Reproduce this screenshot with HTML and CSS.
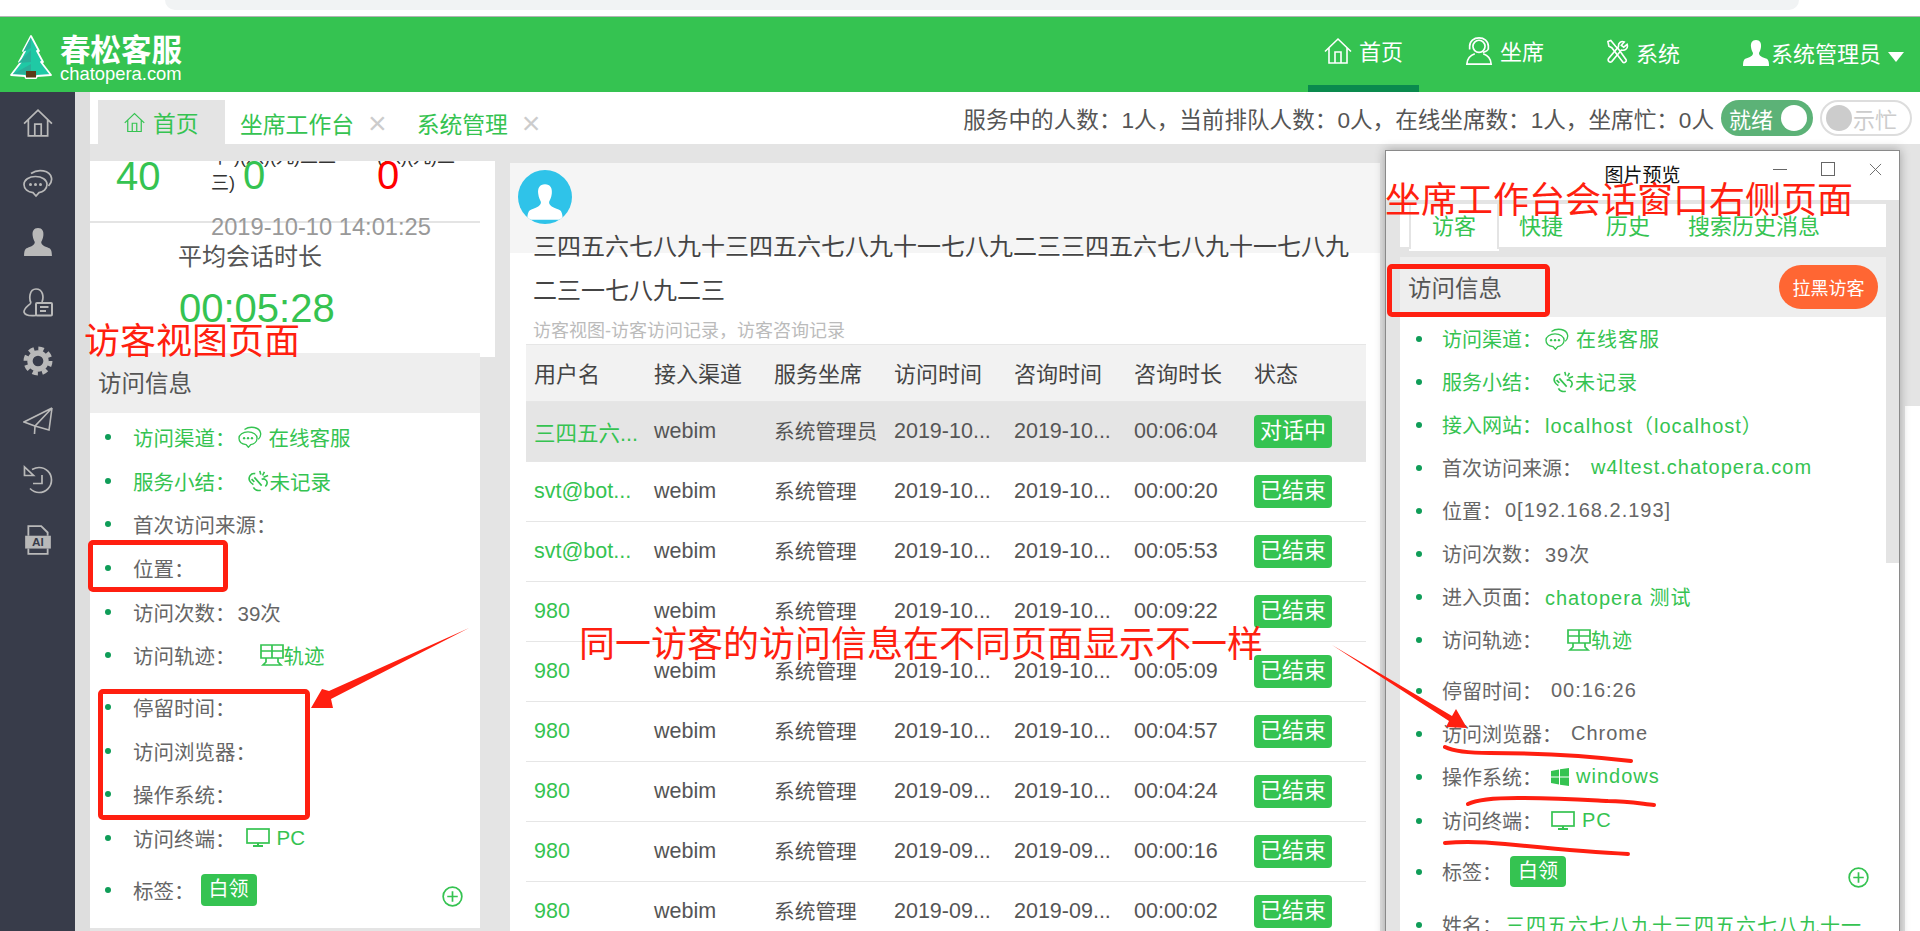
FILE: index.html
```html
<!DOCTYPE html>
<html lang="zh-CN">
<head>
<meta charset="UTF-8">
<title>春松客服</title>
<link rel="stylesheet" href="styles.css">
</head>
<body>

<svg class="icon-defs" xmlns="http://www.w3.org/2000/svg">
  <symbol id="i-home" viewBox="0 0 28 26"><path d="M1 13.500 14 1l13 12.500M5 10v15h18V10M11 25V14h6v11" fill="none" stroke="currentColor" stroke-width="1.600"/></symbol>
  <symbol id="i-chat" viewBox="0 0 30 28"><path d="M13 27l-3-3.400C5 23 1 20 1 15.500 1 11 6 7.500 12.500 7.500S24 11 24 15.500c0 4.500-4 7.500-8 8.100z" fill="none" stroke="currentColor" stroke-width="1.700"/><path d="M8 4.500C15-.5 27 1 28.500 9c.5 3-1 6-3 8" fill="none" stroke="currentColor" stroke-width="1.700"/><circle cx="7.500" cy="15.500" r="1.500" fill="currentColor"/><circle cx="12.500" cy="15.500" r="1.500" fill="currentColor"/><circle cx="17.500" cy="15.500" r="1.500" fill="currentColor"/></symbol>
  <symbol id="i-person" viewBox="0 0 28 28"><path d="M14 1c-4 0-5.500 3-5 7 .3 3 1.500 5 2 6 0 3-3 4-7 5.500C2 20.200 1 22 1 27h26c0-5-1-6.800-3-7.500-4-1.500-7-2.500-7-5.500.5-1 1.700-3 2-6 .5-4-1-7-5-7z" fill="currentColor"/></symbol>
  <symbol id="i-card" viewBox="0 0 30 30"><path d="M8 16C6 12 6 2 13 2c7 0 8 8 6 13M8 16c-3 3-7 5-7 9 1 4 7 4 12 3.500" fill="none" stroke="currentColor" stroke-width="1.700"/><rect x="13" y="16" width="16" height="12.500" rx="1" fill="none" stroke="currentColor" stroke-width="2"/><path d="M17 20h8.500M17 24h6" stroke="currentColor" stroke-width="2"/></symbol>
  <symbol id="i-gear" viewBox="0 0 28 28"><circle cx="14" cy="14" r="7.500" fill="none" stroke="currentColor" stroke-width="5"/><circle cx="14" cy="14" r="11.500" fill="none" stroke="currentColor" stroke-width="4" stroke-dasharray="5 4.030"/></symbol>
  <symbol id="i-plane" viewBox="0 0 30 28"><path d="M29 1 1 15l11 4zM29 1 12 19l-.5 8M29 1l-3 22-14-4" fill="none" stroke="currentColor" stroke-width="1.600"/></symbol>
  <symbol id="i-history" viewBox="0 0 30 30"><path d="M9 4.500C12 3 14 2.500 16 2.500c7 0 12.500 5.500 12.500 12.500S23 27.500 16 27.500c-3.500 0-6.500-1.500-9-4" fill="none" stroke="currentColor" stroke-width="1.700"/><path d="M1.500 2v8.500h9zM19 10v8.500h-9" fill="none" stroke="currentColor" stroke-width="1.700"/></symbol>
  <symbol id="i-ai" viewBox="0 0 24 28"><path d="M3 10V1h12l6 6v3M3 22v5h18v-5" fill="none" stroke="currentColor" stroke-width="1.700"/><rect y="10" width="24" height="12" fill="currentColor"/><text x="12" y="20" text-anchor="middle" font-family="Liberation Sans" font-size="11" font-weight="bold" fill="#383c4a">AI</text></symbol>
  <symbol id="i-agent" viewBox="0 0 28 30"><circle cx="14" cy="10" r="6.500" fill="none" stroke="currentColor" stroke-width="1.800"/><path d="M4 12V10C4 4.500 8.500 1 14 1s10 3.500 10 9v2M24 12c0 2-3 4-6 4.500M4 8.500v5M24 8.500v5" fill="none" stroke="currentColor" stroke-width="1.800"/><path d="M9.500 18C5 19.500 1.500 22 1 29h26c-.5-7-4-9.500-8.500-11" fill="none" stroke="currentColor" stroke-width="1.800"/></symbol>
  <symbol id="i-tools" viewBox="0 0 24 26"><path d="M2 2l3-1 5 6 3 3 8 11c1 2-2 4-3.500 2.500L9.500 13 6 8.500 3 7z" fill="none" stroke="currentColor" stroke-width="1.700"/><path d="M22 5l-3.500 3-2.500-2 3-3.500C16 1 12.500 3.500 13 7.500L2.500 20c-1 2.500 1.500 4.500 3.500 3l10-12c4 1 7.500-2 6-6z" fill="none" stroke="currentColor" stroke-width="1.700"/></symbol>
  <symbol id="i-unrec" viewBox="0 0 24 24"><path d="M9 4C4 3 1 8 3 12c1 2 2.500 3 4 4M7 19c1.500 3 5 4 8 3M14 1l1 4M19 2l-2 4M23 6l-5 2M16 10c3-1 6 1 6 4 0 2-1 3-2 4M8 8l8 9M5 10l3 3" fill="none" stroke="currentColor" stroke-width="1.800"/></symbol>
  <symbol id="i-track" viewBox="0 0 24 22"><path d="M1 1h22v13H1zM12 1v13M1 7h22M6 14v4l-3 3h18l-3-3v-4" fill="none" stroke="currentColor" stroke-width="1.700"/></symbol>
  <symbol id="i-pc" viewBox="0 0 24 20"><rect x="1" y="1" width="22" height="14" fill="none" stroke="currentColor" stroke-width="1.700"/><path d="M11 15h2v2h4v2H7v-2h4z" fill="currentColor"/></symbol>
  <symbol id="i-win" viewBox="0 0 18 18"><path d="M0 3l8-1.500V8.500H0zM9 1.300 18 0v8.500H9zM0 9.500h8v7L0 15zM9 9.500h9V18l-9-1.300z" fill="currentColor"/></symbol>
  <symbol id="i-plus" viewBox="0 0 22 22"><circle cx="11" cy="11" r="9.800" fill="none" stroke="currentColor" stroke-width="1.800"/><path d="M5.500 11h11M11 5.500v11" stroke="currentColor" stroke-width="1.800"/></symbol>
</svg>

<div class="browser-strip"><div class="address-bar"></div></div>

<header class="topbar">
  <div class="logo">
    <svg class="logo-tree" viewBox="0 0 44 44">
      <path d="M22 1 30 16l-2 0 6 11-2 0 10 13-14 1-1 2h-10l-1-2-14-1 10-13-2 0 6-11-2 0z" fill="#1fc9a5" stroke="#fff" stroke-width="1.800" stroke-linejoin="round"/>
      <path d="M22 2 22 13 14 17zM22 15 22 27 9 28zM22 29v10L4 39z" fill="#2ab09a"/>
      <rect x="17" y="36" width="10" height="6.500" fill="#5c3a16"/>
    </svg>
    <div class="logo-text">
      <div class="logo-cn">春松客服</div>
      <div class="logo-en">chatopera.com</div>
    </div>
  </div>
  <nav class="topnav">
    <a class="nav-item active"><svg class="nav-icon"><use href="#i-home"/></svg>首页</a>
    <a class="nav-item"><svg class="nav-icon"><use href="#i-agent"/></svg>坐席</a>
    <a class="nav-item low"><svg class="nav-icon small"><use href="#i-tools"/></svg>系统</a>
    <a class="nav-item low user"><svg class="nav-icon"><use href="#i-person"/></svg>系统管理员<span class="caret"></span></a>
  </nav>
</header>

<div class="layout">
  <aside class="sidebar">
    <svg class="side-icon"><use href="#i-home"/></svg>
    <svg class="side-icon"><use href="#i-chat"/></svg>
    <svg class="side-icon"><use href="#i-person"/></svg>
    <svg class="side-icon"><use href="#i-card"/></svg>
    <svg class="side-icon"><use href="#i-gear"/></svg>
    <svg class="side-icon"><use href="#i-plane"/></svg>
    <svg class="side-icon"><use href="#i-history"/></svg>
    <svg class="side-icon"><use href="#i-ai"/></svg>
  </aside>

  <main class="content">
    <div class="tabbar">
      <div class="tab active"><svg class="tab-icon"><use href="#i-home"/></svg>首页</div>
      <div class="tab">坐席工作台<span class="tab-close">×</span></div>
      <div class="tab">系统管理<span class="tab-close">×</span></div>
      <div class="status">
        <span>服务中的人数：1人，当前排队人数：0人，在线坐席数：1人，坐席忙：0人</span>
        <div class="toggle on">就绪<i></i></div>
        <div class="toggle off"><i></i>示忙</div>
      </div>
    </div>

    <div class="workspace">
      <section class="left-col">
        <div class="summary">
          <div class="stats">
            <div class="stat-num first">40</div>
            <div class="stat-label wide">十 )(八)(九)二二<br>三)<b class="stat-num">0</b></div>
            <div class="stat-label">(八)(九)二<br><b class="stat-num red">0</b></div>
          </div>
          <div class="stat-date">2019-10-10 14:01:25</div>
          <div class="avg-title">平均会话时长</div>
          <div class="avg-value">00:05:28</div>
        </div>
        <div class="info-panel">
          <div class="info-head">访问信息</div>
          <ul class="info-list">
            <li class="green">访问渠道：<span class="val"><svg class="ico"><use href="#i-chat"/></svg>在线客服</span></li>
            <li class="green">服务小结：<span class="val wide"><svg class="ico flush"><use href="#i-unrec"/></svg>未记录</span></li>
            <li>首次访问来源：</li>
            <li>位置：</li>
            <li>访问次数：<span class="val plain">39次</span></li>
            <li>访问轨迹：<span class="val far green"><svg class="ico flush"><use href="#i-track"/></svg>轨迹</span></li>
            <li class="gap">停留时间：</li>
            <li>访问浏览器：</li>
            <li>操作系统：</li>
            <li>访问终端：<span class="val wide green"><svg class="ico"><use href="#i-pc"/></svg>PC</span></li>
            <li class="gap">标签：<span class="tag">白领</span><svg class="plus"><use href="#i-plus"/></svg></li>
          </ul>
        </div>
      </section>

      <section class="visitor">
        <div class="visitor-head">
          <div class="avatar"><svg viewBox="0 0 28 28"><use href="#i-person"/></svg></div>
          <h1 class="visitor-name">三四五六七八九十三四五六七八九十一七八九二三三四五六七八九十一七八九二三一七八九二三</h1>
          <div class="visitor-sub">访客视图-访客访问记录，访客咨询记录</div>
        </div>
        <table class="record-table">
          <thead>
            <tr><th>用户名</th><th>接入渠道</th><th>服务坐席</th><th>访问时间</th><th>咨询时间</th><th>咨询时长</th><th>状态</th></tr>
          </thead>
          <tbody>
            <tr class="current"><td class="user">三四五六...</td><td>webim</td><td>系统管理员</td><td>2019-10...</td><td>2019-10...</td><td>00:06:04</td><td><span class="badge">对话中</span></td></tr>
            <tr><td class="user">svt@bot...</td><td>webim</td><td>系统管理</td><td>2019-10...</td><td>2019-10...</td><td>00:00:20</td><td><span class="badge">已结束</span></td></tr>
            <tr><td class="user">svt@bot...</td><td>webim</td><td>系统管理</td><td>2019-10...</td><td>2019-10...</td><td>00:05:53</td><td><span class="badge">已结束</span></td></tr>
            <tr><td class="user">980</td><td>webim</td><td>系统管理</td><td>2019-10...</td><td>2019-10...</td><td>00:09:22</td><td><span class="badge">已结束</span></td></tr>
            <tr><td class="user">980</td><td>webim</td><td>系统管理</td><td>2019-10...</td><td>2019-10...</td><td>00:05:09</td><td><span class="badge">已结束</span></td></tr>
            <tr><td class="user">980</td><td>webim</td><td>系统管理</td><td>2019-10...</td><td>2019-10...</td><td>00:04:57</td><td><span class="badge">已结束</span></td></tr>
            <tr><td class="user">980</td><td>webim</td><td>系统管理</td><td>2019-09...</td><td>2019-10...</td><td>00:04:24</td><td><span class="badge">已结束</span></td></tr>
            <tr><td class="user">980</td><td>webim</td><td>系统管理</td><td>2019-09...</td><td>2019-09...</td><td>00:00:16</td><td><span class="badge">已结束</span></td></tr>
            <tr><td class="user">980</td><td>webim</td><td>系统管理</td><td>2019-09...</td><td>2019-09...</td><td>00:00:02</td><td><span class="badge">已结束</span></td></tr>
          </tbody>
        </table>
      </section>

      <div class="behind-window"></div>
    </div>
  </main>
</div>

<!-- 图片预览窗口 -->
<div class="preview">
  <div class="preview-title">
    <span>图片预览</span>
    <div class="win-btns">
      <i class="win-min"></i>
      <i class="win-max"></i>
      <svg class="win-close" viewBox="0 0 14 14"><path d="M1 1l12 12M13 1 1 13" stroke="#666" stroke-width="1" fill="none"/></svg>
    </div>
  </div>
  <div class="preview-body">
    <div class="preview-main">
      <div class="win-tabs">
        <div class="win-tab active">访客</div>
        <div class="win-tab">快捷</div>
        <div class="win-tab">历史</div>
        <div class="win-tab">搜索历史消息</div>
      </div>
      <div class="win-head">
        <span>访问信息</span>
        <button class="black-btn">拉黑访客</button>
      </div>
      <ul class="info-list wide-list">
        <li class="green">访问渠道：<span class="val"><svg class="ico"><use href="#i-chat"/></svg>在线客服</span></li>
        <li class="green">服务小结：<span class="val wide"><svg class="ico flush"><use href="#i-unrec"/></svg>未记录</span></li>
        <li class="green">接入网站：<span class="val">localhost（localhost）</span></li>
        <li>首次访问来源：<span class="val wide green">w4ltest.chatopera.com</span></li>
        <li>位置：<span class="val plain">0[192.168.2.193]</span></li>
        <li>访问次数：<span class="val plain">39次</span></li>
        <li>进入页面：<span class="val green">chatopera 测试</span></li>
        <li>访问轨迹：<span class="val far green"><svg class="ico flush"><use href="#i-track"/></svg>轨迹</span></li>
        <li class="gap">停留时间：<span class="val wide plain">00:16:26</span></li>
        <li>访问浏览器：<span class="val wide plain">Chrome</span></li>
        <li>操作系统：<span class="val wide green"><svg class="ico win"><use href="#i-win"/></svg>windows</span></li>
        <li class="gap-xs">访问终端：<span class="val wide green"><svg class="ico"><use href="#i-pc"/></svg>PC</span></li>
        <li class="gap">标签：<span class="tag">白领</span><svg class="plus"><use href="#i-plus"/></svg></li>
        <li class="gap-l">姓名：<span class="val green">三四五六七八九十三四五六七八九十一</span></li>
      </ul>
    </div>
    <div class="preview-scroll"></div>
  </div>
</div>

<!-- 截图上的红色标注 -->
<div class="note note-left">访客视图页面</div>
<div class="note note-right">坐席工作台会话窗口右侧页面</div>
<div class="note note-center">同一访客的访问信息在不同页面显示不一样</div>
<div class="mark mark-pos"></div>
<div class="mark mark-group"></div>
<div class="mark mark-head"></div>
<svg class="scribble" viewBox="0 0 1920 931">
  <path d="M469 628 329 691l-7-2-11 19 22 0-2-9z" fill="#ff1f10"/>
  <path d="M1332 645 1452 716l4-7 11 19-21-1 3-6z" fill="#ff1f10"/>
  <path d="M1445 747c10 5 25 6 45 6 40 0 90 2 141 8M1468 804c10-5 30-6 50-6 40 0 70 2 90 3 20 0 35 3 46 4M1445 843c20-2 40-1 60 1 40 4 80 8 123 10" fill="none" stroke="#ff1f10" stroke-width="4" stroke-linecap="round"/>
</svg>

</body>
</html>
```
FILE: styles.css
```css
* {
    box-sizing: border-box;
}

body {
    margin: 0;
    height: 931px;
    overflow: hidden;
    position: relative;
    font-family: "Liberation Sans", "Noto Sans CJK SC", sans-serif;
    font-size: 18px;
    color: #666;
    background: #e4e4e4;
}

.icon-defs {
    display: none;
}

/* Browser strip */
.browser-strip {
    height: 17px;
    background: #fff;
    border-bottom: 1px solid #b4b4b4;
    padding-left: 165px;
}
.address-bar {
    width: 1634px;
    height: 10px;
    background: #f1f3f4;
    border-radius: 0 0 12px 12px;
}

/* Topbar */
.topbar {
    height: 75px;
    background: #35c351;
    color: #fff;
    display: flex;
    align-items: stretch;
}
.logo {
    display: flex;
    padding: 18px 0 0 9px;
    gap: 7px;
}
.logo-tree {
    width: 44px;
    height: 44px;
}
.logo-cn {
    font-size: 30.500px;
    font-weight: bold;
    line-height: 30px;
    white-space: nowrap;
}
.logo-en {
    font-size: 18.400px;
    line-height: 18px;
}
.topnav {
    margin-left: auto;
    display: flex;
    gap: 30px;
}
.nav-item {
    height: 75px;
    padding: 20px 16px 0;
    display: flex;
    align-items: flex-start;
    font-size: 22px;
    line-height: 32px;
    gap: 7px;
    white-space: nowrap;
}
.nav-item.active {
    border-bottom: 7px solid #0a8a4e;
}
.nav-item.low {
    padding-top: 22px;
}
.nav-item.user {
    gap: 1px;
}
.nav-icon {
    width: 28px;
    height: 28px;
}
.nav-icon.small {
    width: 23px;
    height: 26px;
}
.caret {
    width: 0;
    height: 0;
    margin: 13px 0 0 6px;
    border-left: 8px solid transparent;
    border-right: 8px solid transparent;
    border-top: 10px solid #fff;
}

/* Layout */
.layout {
    display: flex;
    height: 839px;
}
.sidebar {
    width: 75px;
    flex: none;
    background: #383c4a;
    color: #b9b9b9;
    padding-top: 16px;
    display: flex;
    flex-direction: column;
    align-items: center;
    gap: 29.500px;
}
.side-icon {
    width: 30px;
    height: 30px;
}
.content {
    flex: 1;
    min-width: 0;
    border-left: 15px solid #dedede;
}

/* Tabs */
.tabbar {
    height: 52px;
    background: #fff;
    padding-left: 8px;
    display: flex;
    align-items: flex-end;
    font-size: 22.800px;
    color: #35c351;
}
.tab {
    height: 44px;
    padding: 0 15px;
    display: flex;
    align-items: center;
    white-space: nowrap;
}
.tab + .tab {
    padding-top: 2px;
}
.tab.active {
    width: 127px;
    padding-left: 26px;
    background: #e4e4e4;
    gap: 8px;
}
.tab-icon {
    width: 21px;
    height: 21px;
}
.tab-close {
    margin-left: 14px;
    font-size: 32px;
    font-weight: normal;
    color: #ccc;
    line-height: 1;
}
.status {
    margin-left: auto;
    height: 52px;
    padding-right: 8px;
    display: flex;
    align-items: center;
    gap: 7px;
    color: #555;
    font-size: 22.600px;
    white-space: nowrap;
}
.toggle {
    width: 92px;
    height: 36px;
    border-radius: 18px;
    display: flex;
    align-items: center;
    font-size: 22px;
}
.toggle i {
    width: 26px;
    height: 26px;
    border-radius: 50%;
}
.toggle.on {
    background: #5cb277;
    color: #fff;
    padding: 0 6px 0 8px;
    justify-content: space-between;
}
.toggle.on i {
    background: #fff;
}
.toggle.off {
    border: 2px solid #ddd;
    color: #ccc;
    padding: 0 4px;
    gap: 1px;
}
.toggle.off i {
    background: #ccc;
}

/* Workspace */
.workspace {
    height: 787px;
    padding-top: 17px;
    display: flex;
    overflow: hidden;
}
.left-col {
    width: 405px;
    flex: none;
}
.summary {
    height: 196px;
    background: #fff;
    overflow: hidden;
}
.stats {
    width: 390px;
    height: 62px;
    padding: 0 0 25px 26px;
    border-bottom: 2px solid #e4e4e4;
    display: flex;
    align-items: flex-end;
    overflow: hidden;
    color: #333;
}
.stat-num {
    font-size: 40px;
    line-height: 0;
    font-weight: normal;
    color: #35c351;
}
.stat-num.first {
    width: 95px;
    flex: none;
    line-height: 40px;
}
.stat-num.red {
    color: #f00;
}
.stat-label {
    font-size: 18px;
    line-height: 26px;
    white-space: nowrap;
}
.stat-label.wide {
    width: 166px;
    flex: none;
}
.stat-label .stat-num {
    margin-left: 8px;
}
.stat-label .red {
    margin-left: 0;
}
.stat-date {
    margin: -9px 0 0 121px;
    font-size: 23.700px;
    line-height: 26px;
    color: #999;
    position: relative;
}
.avg-title {
    padding-left: 88px;
    font-size: 24px;
    line-height: 30px;
    margin-top: 2px;
    color: #555;
}
.avg-value {
    padding-left: 89px;
    font-size: 40px;
    line-height: 46px;
    margin-top: 13px;
    color: #35c351;
}

.info-panel {
    width: 390px;
    height: 575px;
    margin-top: -4px;
    background: #fff;
    position: relative;
}
.info-head {
    height: 60px;
    background: #eee;
    padding-left: 8px;
    font-size: 23.500px;
    line-height: 62px;
    color: #555;
}
.info-list {
    margin: 0;
    padding: 2px 17px 0 0;
    list-style: none;
    font-size: 20.500px;
}
.info-list li {
    height: 43.700px;
    display: flex;
    align-items: center;
    white-space: nowrap;
}
.info-list li::before {
    content: "";
    width: 6px;
    height: 6px;
    margin: 0 22px 0 15px;
    border-radius: 50%;
    background: #0f9d58;
    flex: none;
}
.info-list li.gap {
    margin-top: 8px;
}
.info-list li.gap-xs {
    margin-top: 1px;
}
.info-list li.gap-l {
    margin-top: 10px;
}
.green {
    color: #35c351;
}
.val {
    margin-left: 2px;
    display: flex;
    align-items: center;
}
.val.wide {
    margin-left: 10px;
}
.val.far {
    margin-left: 24px;
}
.val.plain {
    color: #666;
}
.ico {
    width: 24px;
    height: 22px;
    margin-right: 7px;
}
.ico.flush {
    margin-right: 0;
}
.ico.win {
    width: 18px;
    height: 18px;
}
.tag {
    margin-left: 6px;
    padding: 0 8px;
    height: 32px;
    line-height: 31px;
    background: #35c351;
    color: #fff;
    border-radius: 4px;
    font-size: 20px;
}
.plus {
    width: 21px;
    height: 21px;
    margin: 14px 0 0 auto;
    color: #35c351;
}

/* Visitor table */
.visitor {
    width: 870px;
    margin-left: 15px;
    margin-top: 2px;
    flex: none;
    background: #fff;
}
.visitor-head {
    background: linear-gradient(#f5f5f5 90px, #fff 90px);
    padding-top: 7px;
}
.avatar {
    width: 54px;
    height: 54px;
    margin-left: 8px;
    border-radius: 50%;
    background: #2fc3e9;
    color: #fff;
    overflow: hidden;
}
.avatar svg {
    display: block;
    width: 38px;
    height: 44px;
    margin: 10px auto 0;
}
.visitor-name {
    margin: 1px 24px 0 23px;
    font-size: 24px;
    font-weight: normal;
    line-height: 44px;
    color: #444;
}
.visitor-sub {
    margin: 5px 0 0 23px;
    font-size: 18px;
    line-height: 26px;
    color: #bbb;
}
.record-table {
    margin-left: 16px;
    width: 840px;
    table-layout: fixed;
    border-collapse: collapse;
    font-size: 22px;
    color: #555;
}
.record-table th {
    height: 57px;
    padding: 0 8px 2px;
    background: #f2f2f2;
    font-weight: normal;
    text-align: left;
    color: #444;
    border: 1px solid #e6e6e6;
    border-width: 1px 0;
}
.record-table td {
    height: 60px;
    padding: 0 8px;
    border-bottom: 1px solid #e6e6e6;
    white-space: nowrap;
    overflow: hidden;
    font-size: 21.500px;
}
.record-table td:nth-child(3) {
    font-size: 20.700px;
    padding-bottom: 3px;
}
.record-table tr.current td {
    background: #e5e5e5;
}
.record-table td.user {
    color: #35c351;
}
.badge {
    display: inline-block;
    width: 78px;
    height: 33px;
    line-height: 32px;
    text-align: center;
    background: #35c351;
    color: #fff;
    border-radius: 4px;
    font-size: 22px;
}
.behind-window {
    width: 15px;
    margin-left: auto;
    margin-top: 245px;
    background: #fff;
}

/* Preview window */
.preview {
    position: absolute;
    left: 1385px;
    top: 150px;
    width: 515px;
    height: 790px;
    background: #fff;
    border: 1px solid #8a8a8a;
    box-shadow: 0 0 10px rgba(0, 0, 0, 0.3);
}
.preview-title {
    height: 49px;
    position: relative;
    text-align: center;
    font-size: 19px;
    line-height: 49px;
    color: #111;
}
.win-btns {
    position: absolute;
    top: 11px;
    right: 17px;
    display: flex;
    align-items: center;
    gap: 34px;
}
.win-min {
    width: 14px;
    height: 1px;
    background: #666;
}
.win-max {
    width: 14px;
    height: 14px;
    border: 1px solid #666;
}
.win-close {
    width: 13px;
    height: 13px;
}
.preview-body {
    display: flex;
    height: 740px;
    border-left: 14px solid #e4e4e4;
}
.preview-main {
    flex: 1;
    min-width: 0;
    background: #fff;
}
.preview-scroll {
    width: 13px;
    height: 363px;
    background: #e4e4e4;
}
.win-tabs {
    height: 57px;
    display: flex;
    border-top: 4px solid #e4e4e4;
    border-bottom: 8px solid #e4e4e4;
    font-size: 22px;
    color: #35c351;
    padding-left: 9px;
    align-items: stretch;
    box-shadow: inset 0 -2px 0 #e4e4e4;
}
.win-tab {
    padding: 0 20px;
    line-height: 46px;
    white-space: nowrap;
}
.win-tab:nth-child(3) {
    padding: 0 18px 0 23px;
}
.win-tab.active {
    padding: 0 21px;
    border: 2px solid #e4e4e4;
    border-width: 0 2px;
    box-shadow: 0 2px 0 #fff;
    background: #fff;
}
.win-head {
    height: 60px;
    background: #eee;
    padding: 0 8px;
    display: flex;
    align-items: center;
    justify-content: space-between;
    font-size: 23.500px;
    color: #555;
}
.black-btn {
    width: 99px;
    height: 44px;
    border: 0;
    border-radius: 22px;
    background: #ff6633;
    color: #fff;
    font-family: inherit;
    font-size: 18px;
    padding: 0;
}
.wide-list {
    padding-top: 0;
    font-size: 20px;
}
.wide-list li {
    height: 43px;
}
.wide-list li::before {
    margin: 0 20px 0 16px;
}
.wide-list .val {
    margin-left: 3px;
    letter-spacing: 1px;
}
.wide-list .val.wide {
    margin-left: 9px;
}
.wide-list .val.far {
    margin-left: 25px;
}
.wide-list .tag {
    margin-left: 8px;
    height: 31px;
    line-height: 30px;
}
.wide-list .plus {
    margin-top: 12px;
}

/* Red annotations */
.note {
    position: absolute;
    font-size: 36px;
    line-height: 40px;
    color: #ff1f10;
    white-space: nowrap;
}
.note-left {
    left: 84px;
    top: 322px;
}
.note-right {
    left: 1385px;
    top: 181px;
}
.note-center {
    left: 579px;
    top: 625px;
}
.mark {
    position: absolute;
    border: 5px solid #ff1f10;
    border-radius: 5px;
}
.mark-pos {
    left: 88px;
    top: 540px;
    width: 140px;
    height: 52px;
}
.mark-group {
    left: 98px;
    top: 689px;
    width: 212px;
    height: 131px;
}
.mark-head {
    left: 1387px;
    top: 264px;
    width: 163px;
    height: 53px;
}
.scribble {
    position: absolute;
    left: 0;
    top: 0;
    width: 1920px;
    height: 931px;
    pointer-events: none;
}
```
